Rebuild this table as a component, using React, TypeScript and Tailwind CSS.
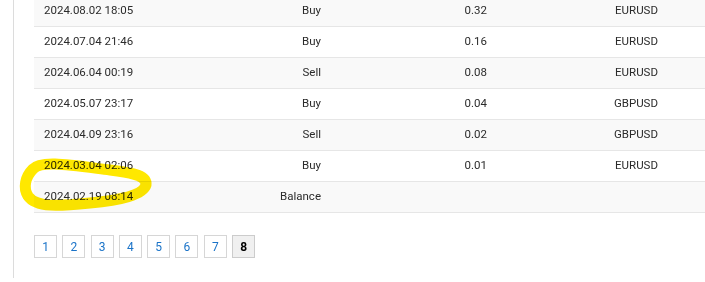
const rows = [
  { time: "2024.08.02 18:05", type: "Buy", volume: "0.32", symbol: "EURUSD" },
  { time: "2024.07.04 21:46", type: "Buy", volume: "0.16", symbol: "EURUSD" },
  { time: "2024.06.04 00:19", type: "Sell", volume: "0.08", symbol: "EURUSD" },
  { time: "2024.05.07 23:17", type: "Buy", volume: "0.04", symbol: "GBPUSD" },
  { time: "2024.04.09 23:16", type: "Sell", volume: "0.02", symbol: "GBPUSD" },
  { time: "2024.03.04 02:06", type: "Buy", volume: "0.01", symbol: "EURUSD" },
  { time: "2024.02.19 08:14", type: "Balance", volume: "", symbol: "" },
];

const pages = [1, 2, 3, 4, 5, 6, 7, 8];

export default function App() {
  return (
    <div
      className="relative w-[705px] h-[282px] overflow-hidden bg-white text-[11.5px] text-[#2b2b2b]"
      style={{ fontFamily: "Roboto, 'Liberation Sans', sans-serif" }}
    >
      <div className="ml-[13px] h-full border-l border-[#dcdcdc] pl-[20px]">
        <div className="-mt-[4px] w-[720px]">
          {rows.map((r, i) => (
            <div
              key={r.time}
              className={`flex h-[31px] items-center border-b border-[#e6e6e6] ${
                i % 2 === 0 ? "bg-[#f9f9f9]" : "bg-white"
              }`}
            >
              <div className="w-[180px] pl-[10px]">{r.time}</div>
              <div className="w-[117px] pr-[10px] text-right">{r.type}</div>
              <div className="w-[166px] pr-[10px] text-right">{r.volume}</div>
              <div className="w-[171px] pr-[10px] text-right">{r.symbol}</div>
              <div className="flex-1" />
            </div>
          ))}
        </div>

        <div className="mt-[22px] flex gap-[5.3px]">
          {pages.map((p) => (
            <div
              key={p}
              className={`flex h-[23px] w-[23px] items-center justify-center border text-[12px] ${
                p === 8
                  ? "border-[#cccccc] bg-[#f0f0f0] font-bold text-black"
                  : "border-[#d6d6d6] bg-white text-[#1a73c8]"
              }`}
            >
              {p}
            </div>
          ))}
        </div>
      </div>

      {/* marker scribble around the balance row */}
      <svg
        className="pointer-events-none absolute left-0 top-0 mix-blend-multiply"
        width="705"
        height="282"
      >
        <path
          d="M 33 169 C 41 160, 70 165, 110 170 C 135 173, 147 176, 146 185 C 143 195, 120 200, 90 203 C 60 206, 36 208, 28 196 C 23 188, 25 177, 33 169"
          fill="none"
          stroke="#ffe800"
          strokeWidth="11"
          strokeLinecap="round"
        />
      </svg>
    </div>
  );
}
